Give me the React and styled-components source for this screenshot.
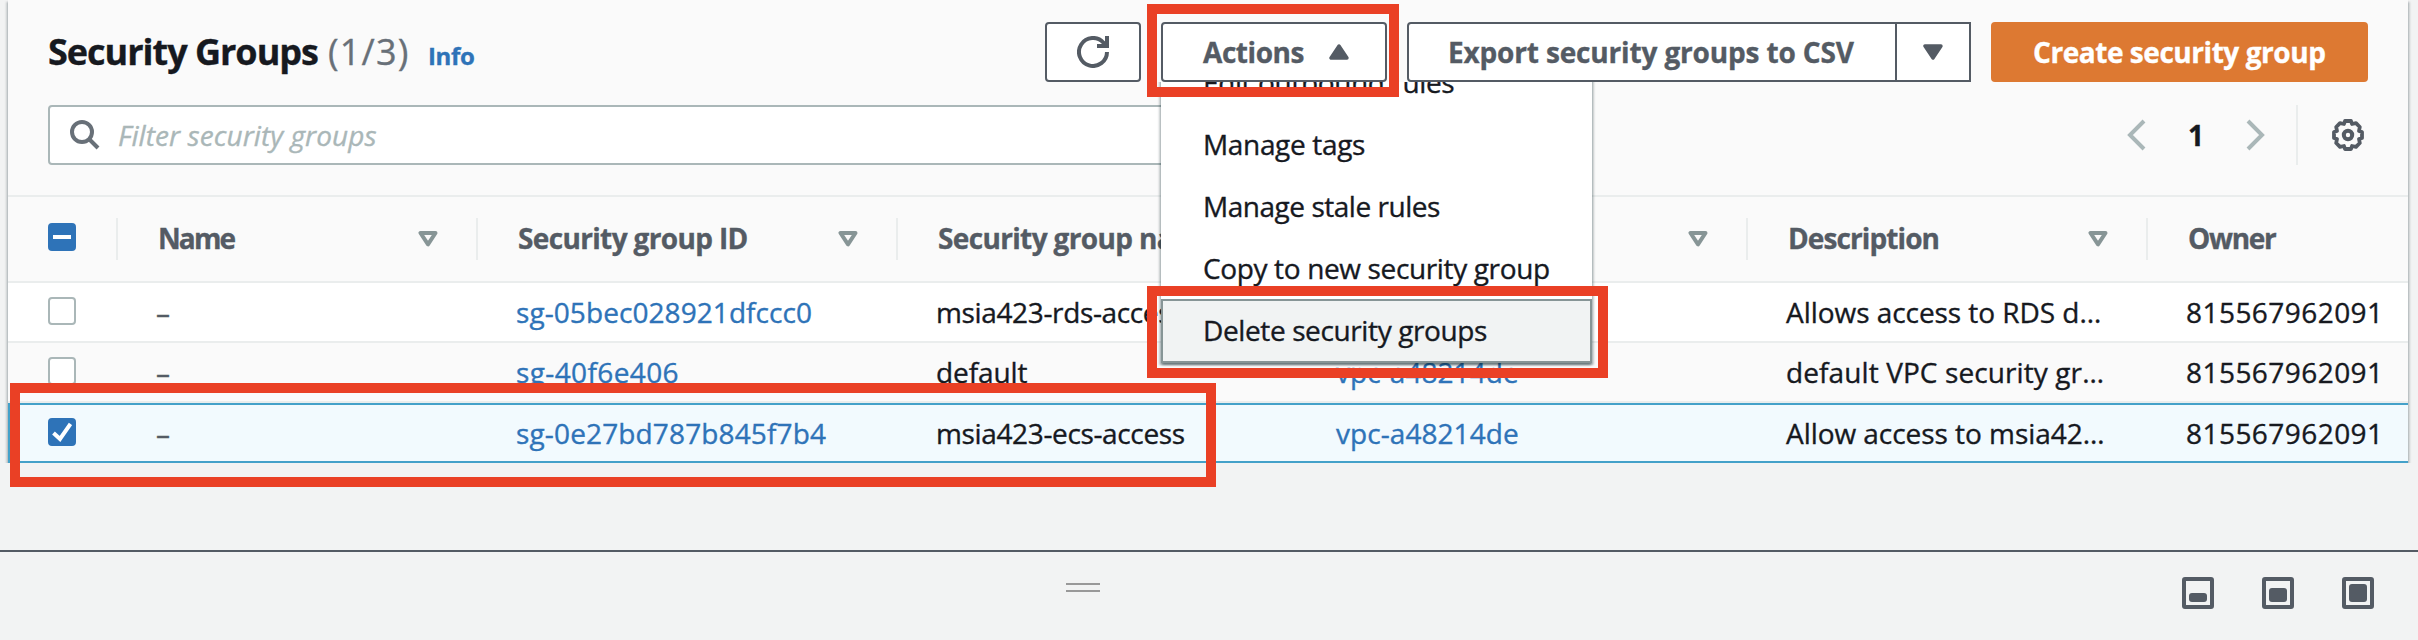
import React from 'react';
import styled, { createGlobalStyle, css } from 'styled-components';

const GlobalStyle = createGlobalStyle`
  * { box-sizing: border-box; }
  body {
    margin: 0;
    background: #f2f3f3;
    color: #16191f;
    font-family: "Open Sans", "Noto Sans", sans-serif;
    font-size: 28px;
    -webkit-text-stroke: 0.35px currentColor;
  }
`;

const Page = styled.div`
  position: relative;
  display: flex;
  flex-direction: column;
  width: 2418px;
  height: 640px;
  overflow: hidden;
  background: #f2f3f3;
`;

const Panel = styled.section`
  margin: 0 10px 0 8px;
  height: 463px;
  flex: none;
  background: #fafafa;
  box-shadow: 0 2px 2px rgba(0, 28, 36, 0.3), 2px 2px 2px rgba(0, 28, 36, 0.15),
    -2px 2px 2px rgba(0, 28, 36, 0.15);
  clip-path: inset(0 -8px 0 -8px);
`;

const Header = styled.header`
  display: flex;
  justify-content: space-between;
  height: 82px;
  padding: 22px 40px 0 40px;
`;

const Heading = styled.div`
  display: flex;
  align-items: baseline;
  height: 60px;
  line-height: 60px;
`;

const Title = styled.h2`
  margin: 0;
  width: 280px;
  font-size: 36px;
  font-weight: 700;
  letter-spacing: -1.01px;
  line-height: 60px;
  white-space: nowrap;
`;

const Count = styled.span`
  width: 100px;
  color: #687078;
  font-size: 36px;
  letter-spacing: 1.2px;
`;

const InfoLink = styled.a`
  color: #2e73b8;
  font-size: 24px;
  font-weight: 700;
  letter-spacing: -0.34px;
`;

const ButtonBar = styled.div`
  display: flex;
`;

const Button = styled.button`
  display: flex;
  align-items: center;
  width: ${(p) => p.$width}px;
  height: 60px;
  margin: 0 0 0 ${(p) => p.$gap || 0}px;
  padding: 0 0 1px ${(p) => p.$inset}px;
  border: 2px solid #545b64;
  border-radius: ${(p) => p.$radius || '4px'};
  background: #fff;
  color: #545b64;
  font: 700 28px "Open Sans", "Noto Sans", sans-serif;
  letter-spacing: ${(p) => p.$spacing || 0}px;
  white-space: nowrap;
  ${(p) =>
    p.$primary &&
    css`
      border-color: #dd7932;
      background: #dd7932;
      color: #fff;
    `}
  svg {
    flex: none;
    display: block;
    margin: 1px 0 0 ${(p) => p.$iconGap || 0}px;
  }
`;

const MenuAnchor = styled.div`
  position: relative;
  display: flex;
  margin-left: 20px;
`;

const MenuClip = styled.div`
  position: absolute;
  z-index: 2;
  top: 60px;
  left: -6px;
  width: 446px;
  height: 290px;
  padding: 0 8px;
  overflow: hidden;
  pointer-events: none;
`;

const Menu = styled.ul`
  margin: -31px 0 0 -2px;
  width: 431px;
  height: 312px;
  padding: 0;
  list-style: none;
  background: #fff;
  box-shadow: 0 2px 2px rgba(0, 28, 36, 0.35), 2px 2px 2px rgba(0, 28, 36, 0.2),
    -2px 2px 2px rgba(0, 28, 36, 0.2);
`;

const MenuItem = styled.li`
  height: 64px;
  margin-bottom: -2px;
  padding-left: 40px;
  border: 2px solid ${(p) => (p.$active ? '#879596' : 'transparent')};
  background: ${(p) => (p.$active ? '#f1f3f3' : 'transparent')};
  letter-spacing: ${(p) => p.$spacing}px;
  line-height: 58px;
  white-space: nowrap;
`;

const Toolbar = styled.div`
  display: flex;
  justify-content: space-between;
  height: 115px;
  padding: 23px 40px 32px;
  border-bottom: 2px solid #eaeded;
`;

const SearchField = styled.div`
  display: flex;
  align-items: center;
  width: 1420px;
  height: 60px;
  padding: 0 0 0 20px;
  border: 2px solid #aab7b8;
  border-radius: 4px;
  background: #fff;
`;

const Placeholder = styled.span`
  margin-left: 18px;
  color: #aab7b8;
  font-style: italic;
  letter-spacing: 0.07px;
`;

const Pagination = styled.nav`
  display: flex;
  align-items: center;
  height: 60px;
  svg { display: block; flex: none; }
`;

const PageNumber = styled.span`
  width: 100px;
  padding: 0 0 1px 42px;
  font-weight: 700;
`;

const Settings = styled.div`
  display: flex;
  align-items: center;
  height: 60px;
  margin-left: 30px;
  padding: 0 4px 0 34px;
  border-left: 2px solid #eaeded;
`;

const Row = styled.div`
  display: grid;
  grid-template-columns: 108px 360px 420px 400px 450px 400px 1fr;
  align-items: center;
  height: 60px;
  border-bottom: 2px solid #eaeded;
  background: ${(p) => (p.$striped ? '#fafafa' : '#fff')};
  ${(p) =>
    p.$selected &&
    css`
      padding-bottom: 2px;
      border-top: 2px solid #44a1c9;
      border-bottom-color: #44a1c9;
      border-left: 2px solid #44a1c9;
      grid-template-columns: 106px 360px 420px 400px 450px 400px 1fr;
      background: #f2fafe;
    `}
`;

const HeaderRow = styled(Row)`
  height: 86px;
  background: #fafafa;
`;

const CheckCell = styled.div`
  padding: 0 0 ${(p) => (p.$header ? 4 : 2)}px ${(p) => (p.$selected ? 38 : 40)}px;
`;

const Cell = styled.div`
  padding-left: 40px;
  letter-spacing: ${(p) => p.$spacing || 0}px;
  line-height: 56px;
  white-space: nowrap;
`;

const Muted = styled.span`
  color: #545b64;
`;

const Link = styled.a`
  color: #2e73b8;
`;

const HeaderCell = styled.div`
  display: flex;
  align-items: center;
  justify-content: space-between;
  height: 42px;
  padding: 0 38px 2px 40px;
  border-left: 2px solid #eaeded;
  color: #545b64;
  font-weight: 700;
  letter-spacing: ${(p) => p.$spacing}px;
  white-space: nowrap;
  svg { margin-top: 2px; }
`;

const Checkbox = styled.span`
  display: flex;
  align-items: center;
  justify-content: center;
  width: 28px;
  height: 28px;
  border: 2px solid ${(p) => (p.$filled ? '#2e73b8' : '#aab7b8')};
  border-radius: 4px;
  background: ${(p) => (p.$filled ? '#2e73b8' : '#fff')};
`;

const SplitPanel = styled.footer`
  position: relative;
  display: flex;
  justify-content: flex-end;
  height: 90px;
  margin-top: 87px;
  padding: 25px 44px 0 0;
  border-top: 2px solid #545b64;
`;

const Grip = styled.div`
  width: 34px;
  height: 9px;
  margin: 6px auto 0 1066px;
  border: solid #999;
  border-width: 2px 0;
`;

const PanelSizes = styled.div`
  display: flex;
  gap: 48px;
`;

const Highlight = styled.div`
  position: absolute;
  z-index: 5;
  left: ${(p) => p.$x}px;
  top: ${(p) => p.$y}px;
  width: ${(p) => p.$w}px;
  height: ${(p) => p.$h}px;
  border: 10px solid #ea4025;
`;

const RefreshIcon = () => (
  <svg width="32" height="32" viewBox="0 0 32 32" fill="none" stroke="#545b64" strokeWidth="4">
    <path d="M30 16A14 14 0 1 1 26.5 6.7L30 10" />
    <path d="M30 0V10H20" />
  </svg>
);

const CaretIcon = ({ up }) => (
  <svg width="20" height="16" viewBox="0 0 20 16">
    <path
      d={up ? 'M2 14H18L10 2Z' : 'M2 2H18L10 14Z'}
      fill="#545b64"
      stroke="#545b64"
      strokeWidth="3.4"
      strokeLinejoin="round"
    />
  </svg>
);

const SortIcon = () => (
  <svg width="20" height="16" viewBox="0 0 20 16">
    <path d="M2.5 2H17.5L10 13.4Z" fill="none" stroke="#879596" strokeWidth="4" strokeLinejoin="round" />
  </svg>
);

const SearchIcon = () => (
  <svg width="30" height="30" viewBox="0 0 30 30" fill="none" stroke="#687078" strokeWidth="4">
    <circle cx="12" cy="12" r="10" />
    <path d="M19 19L28 28" />
  </svg>
);

const ChevronIcon = ({ right }) => (
  <svg width="20" height="32" viewBox="0 0 20 32" fill="none" stroke="#aab7b8" strokeWidth="4">
    <path d={right ? 'M2 2L16 16L2 30' : 'M18 2L4 16L18 30'} />
  </svg>
);

const GearIcon = () => (
  <svg width="32" height="32" viewBox="0 0 32 32" fill="none" stroke="#545b64" strokeWidth="4" strokeLinejoin="round">
    <circle cx="16" cy="16" r="4.2" />
    <path
      strokeWidth="3.8"
      d="M13 2H19L20 5L24 4.2L27.8 8L27 12L30 13V19L27 20L27.8 24L24 27.8L20 27L19 30H13L12 27L8 27.8L4.2 24L5 20L2 19V13L5 12L4.2 8L8 4.2L12 5Z"
    />
  </svg>
);

const CheckIcon = () => (
  <svg width="20" height="20" viewBox="0 0 20 20" fill="none" stroke="#fff" strokeWidth="4">
    <path d="M1.5 11L8 17L18.5 2" />
  </svg>
);

const DashIcon = () => (
  <svg width="18" height="4" viewBox="0 0 18 4">
    <rect width="18" height="4" fill="#fff" />
  </svg>
);

const PanelSizeIcon = ({ top }) => (
  <svg width="32" height="32" viewBox="0 0 32 32">
    <rect x="2" y="2" width="28" height="28" rx="1" fill="none" stroke="#545b64" strokeWidth="4" />
    <rect x="7" y={top} width="18" height={25 - top} rx="3" fill="#545b64" />
  </svg>
);

const columns = [
  { label: 'Name', spacing: -1.9 },
  { label: 'Security group ID', spacing: -0.65 },
  { label: 'Security group name', spacing: -0.65 },
  { label: 'VPC ID', spacing: -0.65 },
  { label: 'Description', spacing: -0.9 },
  { label: 'Owner', spacing: -1.3, last: true },
];

const groups = [
  { id: 'sg-05bec028921dfccc0', idSp: 0.07, name: 'msia423-rds-access', nameSp: -0.36, desc: 'Allows access to RDS d…', descSp: -0.05 },
  { id: 'sg-40f6e406', idSp: 0.38, name: 'default', nameSp: -0.1, desc: 'default VPC security gr…', descSp: 0.1, striped: true },
  { id: 'sg-0e27bd787b845f7b4', idSp: 0.14, name: 'msia423-ecs-access', nameSp: -0.36, desc: 'Allow access to msia42…', descSp: -0.05, selected: true },
];

const menuItems = [
  { label: 'Edit outbound rules', spacing: -0.38 },
  { label: 'Manage tags', spacing: -0.34 },
  { label: 'Manage stale rules', spacing: -0.47 },
  { label: 'Copy to new security group', spacing: -0.36 },
  { label: 'Delete security groups', spacing: -0.38, active: true },
];

export default function App() {
  return (
    <Page>
      <GlobalStyle />
      <Panel>
        <Header>
          <Heading>
            <Title>Security Groups</Title>
            <Count>(1/3)</Count>
            <InfoLink>Info</InfoLink>
          </Heading>
          <ButtonBar>
            <Button $width={96} $inset={30} aria-label="Refresh">
              <RefreshIcon />
            </Button>
            <MenuAnchor>
              <Button $width={226} $inset={40} $spacing={-0.44} $iconGap={25}>
                Actions
                <CaretIcon up />
              </Button>
              <MenuClip>
                <Menu>
                  {menuItems.map((m) => (
                    <MenuItem key={m.label} $spacing={m.spacing} $active={m.active}>
                      {m.label}
                    </MenuItem>
                  ))}
                </Menu>
              </MenuClip>
            </MenuAnchor>
            <Button $width={490} $inset={39} $gap={20} $spacing={-0.16} $radius="4px 0 0 4px">
              Export security groups to CSV
            </Button>
            <Button $width={76} $inset={26} $gap={-2} $radius="0" aria-label="More export options">
              <CaretIcon />
            </Button>
            <Button $primary $width={377} $inset={40} $gap={20} $spacing={-0.45}>
              Create security group
            </Button>
          </ButtonBar>
        </Header>

        <Toolbar>
          <SearchField>
            <SearchIcon />
            <Placeholder>Filter security groups</Placeholder>
          </SearchField>
          <Pagination>
            <ChevronIcon />
            <PageNumber>1</PageNumber>
            <ChevronIcon right />
            <Settings>
              <GearIcon />
            </Settings>
          </Pagination>
        </Toolbar>

        <HeaderRow>
          <CheckCell $header>
            <Checkbox $filled>
              <DashIcon />
            </Checkbox>
          </CheckCell>
          {columns.map((c) => (
            <HeaderCell key={c.label} $spacing={c.spacing}>
              {c.label}
              {!c.last && <SortIcon />}
            </HeaderCell>
          ))}
        </HeaderRow>

        {groups.map((g) => (
          <Row key={g.id} $striped={g.striped} $selected={g.selected}>
            <CheckCell $selected={g.selected}>
              <Checkbox $filled={g.selected}>{g.selected && <CheckIcon />}</Checkbox>
            </CheckCell>
            <Cell>
              <Muted>–</Muted>
            </Cell>
            <Cell $spacing={g.idSp}>
              <Link>{g.id}</Link>
            </Cell>
            <Cell $spacing={g.nameSp}>{g.name}</Cell>
            <Cell $spacing={0.06}>
              <Link>vpc-a48214de</Link>
            </Cell>
            <Cell $spacing={g.descSp}>{g.desc}</Cell>
            <Cell $spacing={0.45}>815567962091</Cell>
          </Row>
        ))}
      </Panel>

      <SplitPanel>
        <Grip />
        <PanelSizes>
          <PanelSizeIcon top={16} />
          <PanelSizeIcon top={11} />
          <PanelSizeIcon top={7} />
        </PanelSizes>
      </SplitPanel>

      <Highlight $x={1147} $y={4} $w={252} $h={93} />
      <Highlight $x={1147} $y={286} $w={461} $h={92} />
      <Highlight $x={10} $y={383} $w={1206} $h={104} />
    </Page>
  );
}
